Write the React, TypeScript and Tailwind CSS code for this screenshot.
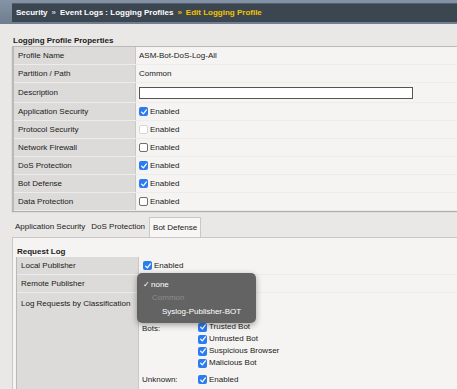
import React from 'react';

const Check: React.FC<{ on?: boolean; faded?: boolean }> = ({ on, faded }) =>
  on ? (
    <span className="inline-flex w-[9px] h-[9px] rounded-[2px] bg-[#2b7cf0] items-center justify-center shrink-0">
      <svg viewBox="0 0 10 10" className="w-[8px] h-[8px]">
        <path d="M2 5.2 L4.2 7.4 L8 2.4" stroke="#fff" strokeWidth="1.6" fill="none" strokeLinecap="round" strokeLinejoin="round" />
      </svg>
    </span>
  ) : (
    <span
      className={`inline-block w-[9px] h-[9px] rounded-[2px] border shrink-0 bg-white ${
        faded ? 'border-[#d6d6d6]' : 'border-[#6e6e6e]'
      }`}
    />
  );

const Enabled: React.FC<{ on?: boolean; faded?: boolean }> = ({ on, faded }) => (
  <div className="flex items-center gap-[2px]">
    <Check on={on} faded={faded} />
    <span>Enabled</span>
  </div>
);

const rows: { label: string; value: React.ReactNode; h?: string }[] = [
  { label: 'Profile Name', value: <span>ASM-Bot-DoS-Log-All</span> },
  { label: 'Partition / Path', value: <span>Common</span> },
  {
    label: 'Description',
    value: <div className="w-[274px] h-[12px] bg-white border border-[#555]" />,
    h: 'h-[20px]',
  },
  { label: 'Application Security', value: <Enabled on /> },
  { label: 'Protocol Security', value: <Enabled faded /> },
  { label: 'Network Firewall', value: <Enabled /> },
  { label: 'DoS Protection', value: <Enabled on /> },
  { label: 'Bot Defense', value: <Enabled on /> },
  { label: 'Data Protection', value: <Enabled /> },
];

const bots = ['Trusted Bot', 'Untrusted Bot', 'Suspicious Browser', 'Malicious Bot'];

export default function App() {
  return (
    <div
      className="w-[457px] h-[389px] overflow-hidden bg-[#e9e8e6] text-[8px] text-[#1a1a1a] relative"
      style={{ fontFamily: '"Liberation Sans", Arial, sans-serif' }}
    >
      {/* Breadcrumb header */}
      <div className="h-[24px] pt-[3px] pl-[12px] bg-gradient-to-b from-[#8494a6] to-[#6f7d8e]">
        <div className="h-[19px] bg-[#3c4651] border-t border-[#56616d] flex items-center pl-[4px] font-bold text-white">
          <span>Security</span>
          <span className="mx-[4px] text-[#c9cdd2]">»</span>
          <span>Event Logs : Logging Profiles</span>
          <span className="mx-[4px] text-[#e6b800]">»</span>
          <span className="text-[#f2c500]">Edit Logging Profile</span>
        </div>
      </div>

      <div className="pl-[12px]">
        <div className="font-bold h-[22px] pt-[11px] pl-[1px]">Logging Profile Properties</div>

        {/* Properties table */}
        <div className="border-l-2 border-t border-[#b9b9b9] shadow-[0_1px_1px_rgba(0,0,0,0.25)]">
          {rows.map((r) => (
            <div key={r.label} className={`flex ${r.h ?? 'h-[18px]'} border-b border-[#ececea]`}>
              <div className="w-[122px] shrink-0 bg-[#dcdbd9] border-r border-[#c9c8c6] flex items-center pl-[4px]">
                {r.label}
              </div>
              <div className="flex-1 bg-[#f5f4f2] flex items-center pl-[3px]">{r.value}</div>
            </div>
          ))}
        </div>

        {/* Tabs */}
        <div className="flex items-end h-[26px] pl-[3px]">
          <div className="h-[20px] flex items-center pr-[6px]">Application Security</div>
          <div className="h-[20px] flex items-center pr-[4px]">DoS Protection</div>
          <div className="h-[20px] flex items-center px-[3px] bg-[#f7f6f4] border border-b-0 border-[#c8c8c8] rounded-t-[1px]">
            Bot Defense
          </div>
        </div>

        {/* Bot defense panel */}
        <div className="bg-[#f5f4f2] border-l border-t border-[#c8c8c8] pl-[3px] h-[160px]">
          <div className="font-bold h-[19px] pt-[8px] pl-[1px]">Request Log</div>
          <div className="border-l border-[#b9b9b9]">
            <div className="flex h-[18px] border-b border-[#ececea]">
              <div className="w-[122px] shrink-0 bg-[#dcdbd9] border-r border-[#c9c8c6] flex items-center pl-[4px]">
                Local Publisher
              </div>
              <div className="flex-1 flex items-center pl-[4px]">
                <Enabled on />
              </div>
            </div>
            <div className="flex h-[18px] border-b border-[#ececea]">
              <div className="w-[122px] shrink-0 bg-[#dcdbd9] border-r border-[#c9c8c6] flex items-center pl-[4px]">
                Remote Publisher
              </div>
              <div className="flex-1" />
            </div>
            <div className="flex h-[110px]">
              <div className="w-[122px] shrink-0 bg-[#dcdbd9] border-r border-[#c9c8c6] pl-[4px] pt-[5px]">
                Log Requests by Classification
              </div>
              <div className="flex-1 pl-[3px] pt-[29px]">
                <div className="flex">
                  <div className="w-[56px] pt-[1px]">Bots:</div>
                  <div className="flex flex-col gap-[2px]">
                    {bots.map((b) => (
                      <div key={b} className="flex items-center gap-[2px] h-[10px]">
                        <Check on />
                        <span>{b}</span>
                      </div>
                    ))}
                  </div>
                </div>
                <div className="flex mt-[5px]">
                  <div className="w-[56px] pt-[1px]">Unknown:</div>
                  <Enabled on />
                </div>
              </div>
            </div>
          </div>
        </div>
      </div>

      {/* Open select menu */}
      <div className="absolute left-[137px] top-[273px] w-[119px] h-[50px] rounded-[5px] bg-[#5b5b5b]/95 shadow-[0_2px_6px_rgba(0,0,0,0.35)] text-white py-[5px]">
        <div className="flex items-center h-[13px] pl-[6px]">
          <span className="w-[8px]">✓</span>
          <span>none</span>
        </div>
        <div className="flex items-center h-[14px] pl-[15px] text-[#8c8c8c]">Common</div>
        <div className="flex items-center h-[14px] pl-[25px]">Syslog-Publisher-BOT</div>
      </div>
    </div>
  );
}
